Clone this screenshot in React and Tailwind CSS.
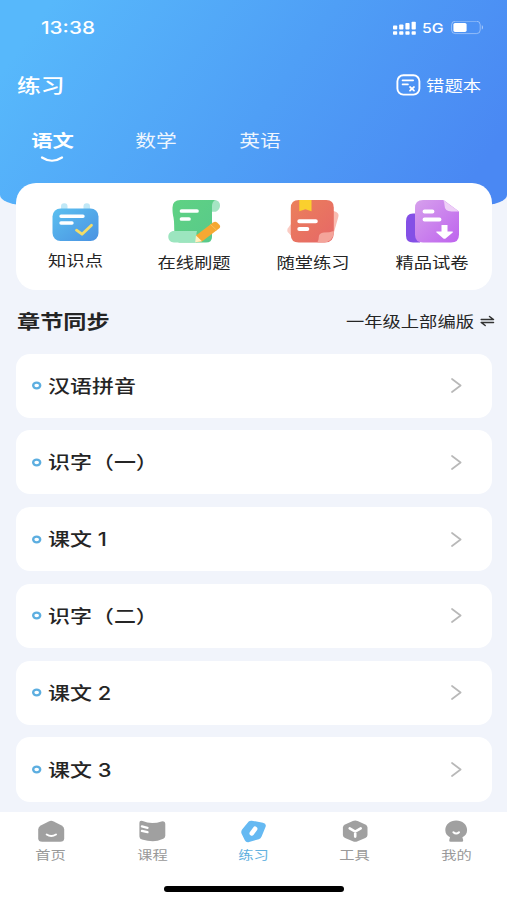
import clsx from "clsx";

const chapters = ["汉语拼音", "识字（一）", "课文 1", "识字（二）", "课文 2", "课文 3"];

function Signal() {
  return (
    <svg width="23" height="14" viewBox="0 0 23 14" fill="#fff">
      <rect x="0" y="4.5" width="4.2" height="4" rx="0.8" />
      <rect x="6.2" y="3.5" width="4.2" height="5" rx="0.8" />
      <rect x="12.4" y="2" width="4.2" height="6.5" rx="0.8" />
      <rect x="18.6" y="0.8" width="4.2" height="7.7" rx="0.8" />
      <rect x="0" y="10.2" width="4.2" height="3.6" rx="0.8" />
      <rect x="6.2" y="10.2" width="4.2" height="3.6" rx="0.8" />
      <rect x="12.4" y="10.2" width="4.2" height="3.6" rx="0.8" />
      <rect x="18.6" y="10.2" width="4.2" height="3.6" rx="0.8" />
    </svg>
  );
}

function Battery() {
  return (
    <svg width="33" height="14" viewBox="0 0.5 33 14" fill="none">
      <rect x="0.6" y="0.7" width="28.6" height="12.4" rx="3.6" stroke="#fff" strokeOpacity="0.4" />
      <rect x="2.4" y="2.4" width="13.2" height="9" rx="1.6" fill="#fff" />
      <path d="M30.8 4.8c1.5.4 1.5 3.8 0 4.2z" fill="#fff" fillOpacity="0.55" />
    </svg>
  );
}

function MistakeIcon() {
  return (
    <svg width="25" height="22" viewBox="0 0 25 22" fill="none" stroke="#fff" strokeLinecap="round">
      <rect x="1.4" y="1.2" width="22" height="19.4" rx="6" strokeWidth="1.9" />
      <path d="M6.5 6.4h10.700M6.500 10.400h5.500" strokeWidth="1.6" />
      <path d="M14 13l4 3.600M18 13l-4 3.600" strokeWidth="1.7" />
    </svg>
  );
}

function KnowledgeIcon() {
  return (
    <svg width="54" height="44" viewBox="0.5 0 54 44" fill="none">
      <defs>
        <linearGradient id="know" x1="0" y1="0" x2="1" y2="1">
          <stop stopColor="#5bc0f0" />
          <stop offset="1" stopColor="#4a92e2" />
        </linearGradient>
      </defs>
      <rect x="12.5" y="3.2" width="6.5" height="9" rx="3" fill="#c0e8f7" />
      <rect x="35" y="3.2" width="6.5" height="9" rx="3" fill="#c0e8f7" />
      <rect x="4" y="8.5" width="46" height="32.5" rx="8" fill="url(#know)" />
      <path d="M12.500 16.200h22M12.500 23h11" stroke="#fff" strokeWidth="3.4" strokeLinecap="round" />
      <path d="M28 30.200l5.500 4 9.500-9" stroke="#f3dc68" strokeWidth="2.8" strokeLinecap="round" strokeLinejoin="round" />
    </svg>
  );
}

function PaperIcon() {
  return (
    <svg width="54" height="44" viewBox="0.5 0.5 54 44" fill="none">
      <defs>
        <linearGradient id="paper" x1="0" y1="0" x2="1" y2="1">
          <stop stopColor="#5fd283" />
          <stop offset="1" stopColor="#58c98b" />
        </linearGradient>
      </defs>
      <path d="M44 .5h3c3.300 0 5.500 2.400 5.500 5.500s-2.200 6.300-5.500 6.300h-3z" fill="#a5e5c3" />
      <path d="M13 .5h34.500q-3 2-3 6v31q0 5.500-6 5.500H12q-4 0-5-9c-.6-6 0-11-1-16s-1-7-1-10q0-7.500 8-7.500z" fill="url(#paper)" />
      <path d="M6.500 31.500h23c-2 5 1.500 11.500 6.500 11.500H6.500C3 43 .8 40.500.8 37.300s2.200-5.800 5.700-5.800z" fill="#9ce5bf" />
      <path d="M14 11.500h15.500M14 19.500h7.500" stroke="#fff" strokeWidth="3.7" strokeLinecap="round" />
      <path d="M28.500 36L45.500 23q2.300-1.600 4.400.3l2 1.900q1.700 2-.4 3.900L34.500 42l-6 .7z" fill="#f5a833" />
      <path d="M28.500 36l6 5.800-6.800 1z" fill="#fff1c4" />
      <path d="M43 25l6 5.600" stroke="#f7c05c" strokeWidth="1" />
    </svg>
  );
}

function ClassIcon() {
  return (
    <svg width="54" height="44" viewBox="1.2 0.5 54 44" fill="none">
      <defs>
        <linearGradient id="class" x1="0" y1="0" x2="1" y2="1">
          <stop stopColor="#eb805b" />
          <stop offset="1" stopColor="#e66767" />
        </linearGradient>
      </defs>
      <path d="M44 10l6.500 2.500q3 1.500 2 5L47 37l-6 4z" fill="#f9bcb2" />
      <path d="M7 22L1.900 29q-.8 2 0 3.500L9 40z" fill="#fbccc4" />
      <path d="M13 .5h27.500q7.500 0 7.500 7.500v25q0 10-9 10H13q-8 0-8-8V8.500q0-8 8-8z" fill="url(#class)" />
      <path d="M48 31.500v2.500q-1.500 9-11 9h-5.500q1.500-2.500 1.500-5.500 0-4 5-4.500 6 0 10-1.500z" fill="#f4a49a" />
      <path d="M13.500.5h12.200v11.300l-6.100-2-6.100 2z" fill="#fad02e" />
      <path d="M13.500 21.800h16.500M13.500 29.500h8" stroke="#fff" strokeWidth="4" strokeLinecap="round" />
    </svg>
  );
}

function ExamIcon() {
  return (
    <svg width="54" height="44" viewBox="1 0.5 54 44" fill="none">
      <defs>
        <linearGradient id="exam" x1="0" y1="0" x2="1" y2="1">
          <stop stopColor="#d6a0ec" />
          <stop offset="1" stopColor="#be63ee" />
        </linearGradient>
      </defs>
      <path d="M15 14v29H8q-7 0-7-7V22q0-8 7-8z" fill="#8450e6" />
      <path d="M18 .5h20.500L54 12v23q0 8-8 8H18q-8 0-8-8V8.500q0-8 8-8z" fill="url(#exam)" />
      <path d="M38 .5q1.500 1.500 1.500 5 0 6.500 7 6.500H54z" fill="#eed0f7" />
      <path d="M19.500 12h8M19.500 20h15" stroke="#fff" strokeWidth="3.9" strokeLinecap="round" />
      <path d="M36.500 25.500h6v6.500h5q.8.300.2 1l-6.800 5.800q-1.400 1-2.800 0L31.500 33q-.7-.8.200-1h4.800z" fill="#fff" />
    </svg>
  );
}

function HomeIcon() {
  return (
    <svg width="28" height="24" viewBox="-0.2 0.3 28 24" fill="none">
      <path d="M11.500 1.700q2.500-1.200 5 0l8 4.100q2.500 1.300 2.500 4V18.500q0 3.500-4 3.500H5q-4 0-4-3.500V9.800q0-2.700 2.500-4z" fill="#a0a0a0" />
      <path d="M9.500 14.800q4.500 3 9.300 0" stroke="#fff" strokeWidth="2" strokeLinecap="round" />
    </svg>
  );
}

function CourseIcon() {
  return (
    <svg width="28" height="24" viewBox="-0.2 0.3 28 24" fill="none">
      <path d="M4.400 1.200Q9 3.300 14 3.300t9.200-1.600q3.900-1 3.900 2.300v12q0 2.200-2 3-6 2.500-10.500 2.500-5 0-10.800-1.800Q1.200 19 1.200 16.700V3q0-2.600 3.200-1.800z" fill="#a0a0a0" />
      <path d="M3.700 6.700l5.600 1.400M3.700 11.200l5.600 1.300" stroke="#fff" strokeWidth="2.3" strokeLinecap="round" />
    </svg>
  );
}

function PracticeIcon() {
  return (
    <svg width="28" height="24" viewBox="-0.2 0.3 28 24" fill="none">
      <path d="M9.500 1.800q1.200-1 3-.8l11.200 2q3.800.9 2.700 4l-4 9.800q-.8 2-2.800 2.700l-9.700 2.800q-3 .8-4.300-1.800L2.300 13.700q-.7-1.900.6-3.900z" fill="#65b9f2" />
      <path d="M12.600 13.700l3.300-4.600" stroke="#fff" strokeWidth="4.6" strokeLinecap="round" />
    </svg>
  );
}

function ToolIcon() {
  return (
    <svg width="28" height="24" viewBox="-0.2 0.3 28 24" fill="none">
      <path d="M11.600 1.300q2.400-1 4.800 0l7.700 3.400q2.200 1 2.200 3v7.500q0 2-2.200 3l-7.700 3.300q-2.400 1-4.800 0l-7.700-3.300q-2.200-1-2.200-3V7.700q0-2 2.200-3z" fill="#a0a0a0" />
      <path d="M8.500 8.700L14 11.900l5.500-3.200M14 11.900v5" stroke="#fff" strokeWidth="2.6" strokeLinecap="round" />
    </svg>
  );
}

function MineIcon() {
  return (
    <svg width="28" height="24" viewBox="-0.2 0.3 28 24" fill="none">
      <path d="M14 .8c6.200 0 10.900 4 10.900 9.400 0 3.500-1.900 6-4.700 7.300l.8 3q.2 1.500-1.500 1.500H8.500q-1.700 0-1.500-1.500l.8-3C5 16.200 3.100 13.700 3.100 10.200 3.100 4.800 7.800.8 14 .8z" fill="#a0a0a0" />
      <path d="M11.200 12.500q2.800 2.800 5.600 0" stroke="#fff" strokeWidth="2" strokeLinecap="round" />
    </svg>
  );
}

const shortcuts = [
  { label: "知识点", icon: KnowledgeIcon, raised: true },
  { label: "在线刷题", icon: PaperIcon },
  { label: "随堂练习", icon: ClassIcon },
  { label: "精品试卷", icon: ExamIcon }
];

const navItems = [
  { label: "首页", icon: HomeIcon },
  { label: "课程", icon: CourseIcon },
  { label: "练习", icon: PracticeIcon, active: true },
  { label: "工具", icon: ToolIcon },
  { label: "我的", icon: MineIcon }
];

// Wide lettering used across the whole app
function Wide({ className, children }) {
  return <span className={clsx("inline-block whitespace-nowrap scale-x-[1.22]", className)}>{children}</span>;
}

function Header() {
  return (
    <header className="h-[205px] bg-[linear-gradient(125deg,#57b8fb_8%,#4f9ff6_52%,#4a88f3_92%)] text-white [border-radius:0_0_24px_24px/0_0_10px_10px]">
      <div className="flex h-[55px] items-center justify-between pr-[23px] pl-[41px]">
        <span className="inline-block origin-left scale-x-[1.22] pt-[2px] font-['Inter'] text-[17px] font-medium">13:38</span>
        <div className="flex items-center">
          <Signal />
          <span className="ml-[6px] w-[22px] pt-px font-['Inter'] text-[13.5px] font-medium">
            <span className="inline-block origin-left scale-x-[1.17]">5G</span>
          </span>
          <span className="ml-[7px]">
            <Battery />
          </span>
        </div>
      </div>
      <div className="flex h-[60px] items-center justify-between pr-[26px] pl-[17px]">
        <Wide className="origin-left text-[19.5px] font-medium">练习</Wide>
        <div className="flex items-center gap-[15px]">
          <MistakeIcon />
          <Wide className="origin-right text-[15px]">错题本</Wide>
        </div>
      </div>
      <div className="flex">
        {["语文", "数学", "英语"].map((tab, i) => (
          <div key={tab} className="flex w-[104px] flex-col items-center pt-[11px]">
            <Wide className={clsx("leading-[28px]", i === 0 ? "text-[17.5px] font-bold" : "text-[17px] opacity-90")}>{tab}</Wide>
            {i === 0 && (
              <svg className="mt-px" width="24" height="8" viewBox="0 0 24 8" fill="none">
                <path d="M2 2.500q10 6.500 20 0" stroke="#fff" strokeWidth="2.2" strokeLinecap="round" />
              </svg>
            )}
          </div>
        ))}
      </div>
    </header>
  );
}

export default function App() {
  return (
    <div className="flex h-[900px] w-[507px] flex-col overflow-hidden bg-[#f1f4fb] font-['Noto_Sans_CJK_SC',sans-serif] text-[#252525]">
      <Header />
      <main className="relative -mt-[22px] flex-1 pr-[15px] pl-[16px]">
        <section className="grid h-[107px] grid-cols-4 rounded-[20px] bg-white pt-[17px]">
          {shortcuts.map(({ label, icon: Icon, raised }) => (
            <div key={label} className="flex flex-col items-center">
              <Icon />
              <Wide className={clsx("text-[15px] leading-[20px]", raised ? "mt-[6px]" : "mt-[8px]")}>{label}</Wide>
            </div>
          ))}
        </section>
        <div className="-mr-[3px] flex h-[63.5px] items-center justify-between pb-[2px] pl-[1px]">
          <Wide className="origin-left text-[19px] font-bold">章节同步</Wide>
          <div className="flex items-center gap-[6px]">
            <Wide className="origin-right text-[15px]">一年级上部编版</Wide>
            <svg width="15" height="12" viewBox="0 0 15 12" fill="none" stroke="#333" strokeWidth="1.5" strokeLinecap="round" strokeLinejoin="round">
              <path d="M1.200 4.600h12.300L9.500 1.500M13.500 7.400H1.200l4 3.100" />
            </svg>
          </div>
        </div>
        <ul className="flex flex-col gap-[12.6px]">
          {chapters.map((name) => (
            <li key={name} className="flex h-[64.2px] items-center rounded-[14px] bg-white pr-[30px] pl-[16px]">
              <svg width="10" height="9" viewBox="0 0 10 9" fill="none">
                <ellipse cx="4.7" cy="4.5" rx="3.5" ry="2.9" stroke="#5caee0" strokeWidth="2.4" />
              </svg>
              <Wide className="ml-[6px] origin-left pt-px font-['Inter','Noto_Sans_CJK_SC',sans-serif] text-[18px] font-medium">{name}</Wide>
              <svg className="ml-auto" width="11" height="15" viewBox="0 0 11 15" fill="none">
                <path d="M1 1l8.600 6.500L1 14" stroke="#b8b8b8" strokeWidth="1.7" strokeLinecap="round" strokeLinejoin="round" />
              </svg>
            </li>
          ))}
        </ul>
      </main>
      <footer className="h-[88px] shrink-0 bg-white">
        <nav className="grid grid-cols-5 pt-[8px]">
          {navItems.map(({ label, icon: Icon, active }) => (
            <div key={label} className="flex flex-col items-center">
              <Icon />
              <Wide className={clsx("mt-px text-[12.5px] leading-[20px]", active ? "text-[#62b1e0]" : "text-[#999]")}>{label}</Wide>
            </div>
          ))}
        </nav>
        <div className="mx-auto mt-[21px] h-[6px] w-[180px] rounded-full bg-black" />
      </footer>
    </div>
  );
}
